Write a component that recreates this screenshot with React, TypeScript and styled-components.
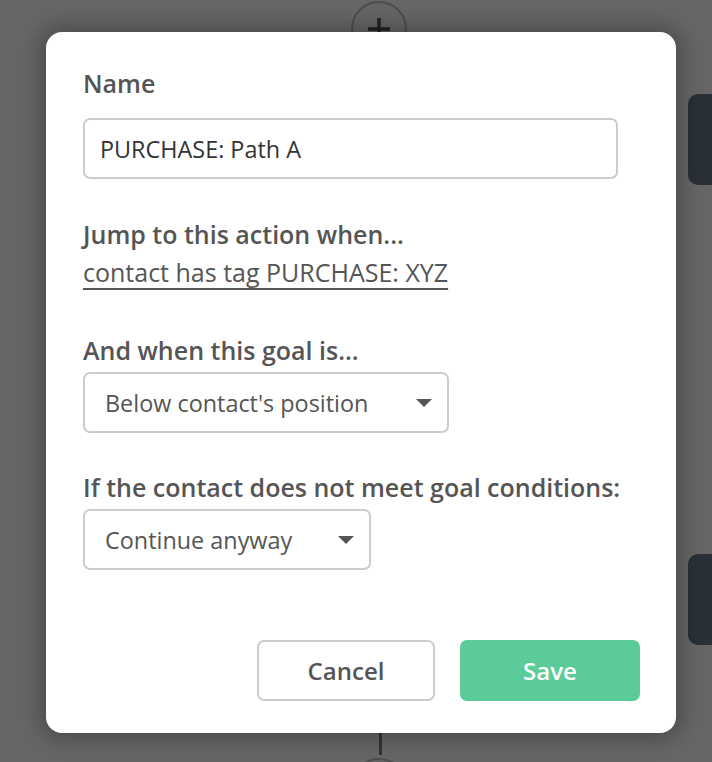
import styled, { createGlobalStyle } from 'styled-components';

const GlobalStyle = createGlobalStyle`
  html, body {
    margin: 0;
    padding: 0;
    background: #666666;
  }
  body {
    font-family: 'Open Sans', 'Noto Sans', sans-serif;
  }
`;

const Canvas = styled.div`
  position: relative;
  width: 712px;
  height: 762px;
  overflow: hidden;
  background: #666666;
`;

const NodeCircle = styled.div<{ $top: number }>`
  position: absolute;
  left: 351px;
  top: ${(p) => p.$top}px;
  width: 56px;
  height: 56px;
  box-sizing: border-box;
  border-radius: 50%;
  border: 2px solid #4d4d4d;
  display: flex;
  align-items: center;
  justify-content: center;
`;

const Connector = styled.div`
  position: absolute;
  left: 379px;
  top: 733px;
  width: 3px;
  height: 22px;
  background: #333;
`;

const SideCard = styled.div<{ $top: number }>`
  position: absolute;
  left: 688px;
  top: ${(p) => p.$top}px;
  width: 60px;
  height: 91px;
  border-radius: 10px;
  background: #2a3038;
`;

const Dialog = styled.div`
  position: absolute;
  left: 46px;
  top: 32px;
  width: 630px;
  height: 701px;
  box-sizing: border-box;
  padding: 35px 36px 32px 37px;
  background: #fff;
  border-radius: 16px;
  box-shadow: 0 0 22px 6px rgba(0, 0, 0, 0.28);
  display: flex;
  flex-direction: column;
`;

const Field = styled.div<{ $mt?: number }>`
  display: flex;
  flex-direction: column;
  align-items: flex-start;
  margin-top: ${(p) => p.$mt ?? 0}px;
`;

const Label = styled.div<{ $gap: number }>`
  font-size: 25px;
  line-height: 32px;
  font-weight: 600;
  color: #555;
  margin-bottom: ${(p) => p.$gap}px;
`;

const TextInput = styled.input`
  width: 535px;
  height: 61px;
  box-sizing: border-box;
  border: 2px solid #cccccc;
  border-radius: 7px;
  padding: 0 15px;
  font-family: 'Open Sans', 'Noto Sans', sans-serif;
  font-size: 23.4px;
  color: #333;
  outline: none;
`;

const ConditionLink = styled.a`
  font-size: 25px;
  line-height: 32px;
  color: #555;
  text-decoration: underline;
  text-underline-offset: 6px;
  text-decoration-thickness: 1.5px;
  cursor: pointer;
`;

const Select = styled.div<{ $width: number }>`
  width: ${(p) => p.$width}px;
  height: 61px;
  box-sizing: border-box;
  border: 2px solid #cccccc;
  border-radius: 7px;
  padding: 0 15px 0 20px;
  display: flex;
  align-items: center;
  justify-content: space-between;
  font-size: 23.4px;
  color: #555;
`;

const Caret = styled.span`
  width: 0;
  height: 0;
  border-left: 8.5px solid transparent;
  border-right: 8.5px solid transparent;
  border-top: 8px solid #555;
`;

const Footer = styled.div`
  margin-top: auto;
  display: flex;
  justify-content: flex-end;
  gap: 25px;
`;

const Button = styled.button<{ $primary?: boolean }>`
  width: ${(p) => (p.$primary ? 180 : 178)}px;
  height: 61px;
  box-sizing: border-box;
  border-radius: 7px;
  border: 2px solid ${(p) => (p.$primary ? '#5bcc99' : '#cccccc')};
  background: ${(p) => (p.$primary ? '#5bcc99' : '#fff')};
  color: ${(p) => (p.$primary ? '#fff' : '#555')};
  font-family: 'Open Sans', 'Noto Sans', sans-serif;
  font-size: 24px;
  font-weight: 600;
  cursor: pointer;
`;

export default function App() {
  return (
    <Canvas>
      <GlobalStyle />
      <NodeCircle $top={1}>
        <svg width="26" height="26" viewBox="0 0 26 26">
          <path d="M13 2 V24 M2 13 H24" stroke="#222" strokeWidth="3.5" />
        </svg>
      </NodeCircle>
      <Connector />
      <NodeCircle $top={758} />
      <SideCard $top={94} />
      <SideCard $top={554} />

      <Dialog>
        <Field>
          <Label $gap={19}>Name</Label>
          <TextInput defaultValue="PURCHASE: Path A" />
        </Field>

        <Field $mt={39}>
          <Label $gap={6}>Jump to this action when...</Label>
          <ConditionLink>contact has tag PURCHASE: XYZ</ConditionLink>
        </Field>

        <Field $mt={46}>
          <Label $gap={6}>And when this goal is...</Label>
          <Select $width={366}>
            Below contact's position
            <Caret />
          </Select>
        </Field>

        <Field $mt={38}>
          <Label $gap={6}>If the contact does not meet goal conditions:</Label>
          <Select $width={288}>
            Continue anyway
            <Caret />
          </Select>
        </Field>

        <Footer>
          <Button>Cancel</Button>
          <Button $primary>Save</Button>
        </Footer>
      </Dialog>
    </Canvas>
  );
}
